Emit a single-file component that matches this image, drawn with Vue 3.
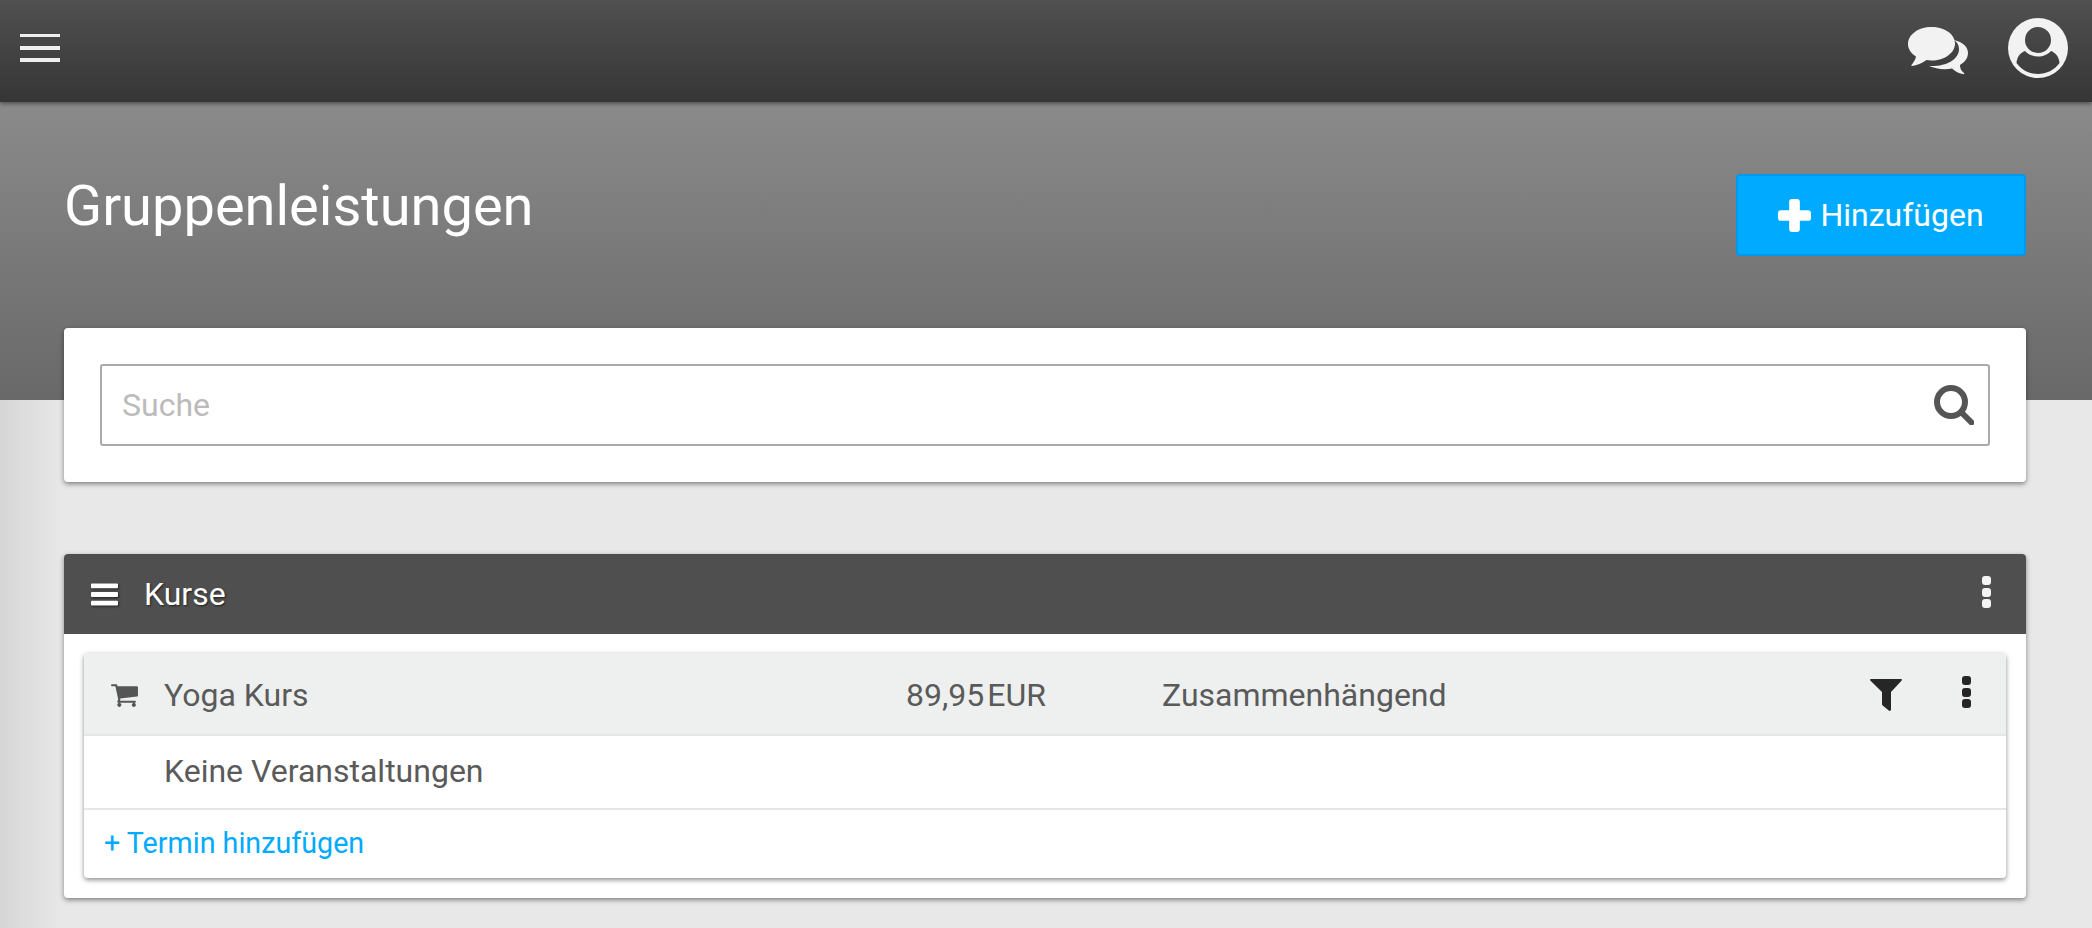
<template>
    <div class="page">
        <header class="topbar">
            <button class="burger"><span></span><span></span><span></span></button>
            <div class="top-icons">
                <svg class="chat" viewBox="0 0 60 48">
                    <path d="M23.500 0C10.500 0 0 7.500 0 17c0 5 3 9.500 8 12.500-.5 3-2.500 6-4.500 8.500-.3.500 0 1 .5 1 5-.5 10-3 14.500-6 1.500.3 3 .5 5 .5 13 0 23.500-7.500 23.500-17S36.500 0 23.500 0z" />
                    <path d="M46 13C55 15 60 20 60 26C60 31 57 35 52 38C52 41 53 44 56 46C56.500 47 56 47.500 55 47C50 46.500 47 44 44 41.500C36 43 28 42 21 39C37 40 51 33 51 22C51 18 49 15 46 13z" />
                </svg>
                <svg class="avatar" viewBox="0 0 60 60">
                    <path fill-rule="evenodd" d="M30 0a30 30 0 1 0 0 60a30 30 0 1 0 0-60zM30 9a13 13 0 1 1 0 26a13 13 0 1 1 0-26zM17 33c3 3.500 8 5.500 13 5.500s10-2 13-5.500c5 2 8 6 8.500 12-5 7-13 11-21.500 11s-16.500-4-21.500-11c.5-6 3.500-10 8.500-12z" />
                </svg>
            </div>
        </header>

        <section class="hero">
            <h1>Gruppenleistungen</h1>
            <button class="add-btn">
                <svg viewBox="0 0 34 34"><path d="M11.500 3a3 3 0 0 1 3-3h5a3 3 0 0 1 3 3v8.500H31a3 3 0 0 1 3 3v5a3 3 0 0 1-3 3h-8.500V31a3 3 0 0 1-3 3h-5a3 3 0 0 1-3-3v-8.500H3a3 3 0 0 1-3-3v-5a3 3 0 0 1 3-3h8.500z" /></svg>
                <span>Hinzufügen</span>
            </button>
        </section>

        <main class="content">
            <div class="card search-card">
                <div class="search-box">
                    <span class="placeholder">Suche</span>
                    <svg class="search-icon" viewBox="0 0 40 40">
                        <circle cx="17" cy="17" r="14" />
                        <line x1="27.500" y1="27.500" x2="37.500" y2="37.500" />
                    </svg>
                </div>
            </div>

            <div class="card group">
                <div class="group-head">
                    <svg class="bars" viewBox="0 0 28 24"><path d="M1 1h26a1 1 0 0 1 1 1v3a1 1 0 0 1-1 1H1a1 1 0 0 1-1-1V2a1 1 0 0 1 1-1zM1 10h26a1 1 0 0 1 1 1v3a1 1 0 0 1-1 1H1a1 1 0 0 1-1-1v-3a1 1 0 0 1 1-1zM1 19h26a1 1 0 0 1 1 1v3a1 1 0 0 1-1 1H1a1 1 0 0 1-1-1v-3a1 1 0 0 1 1-1z" /></svg>
                    <span class="group-title">Kurse</span>
                    <span class="dots light"><i></i><i></i><i></i></span>
                </div>
                <div class="group-body">
                    <div class="inner">
                        <div class="row row-head">
                            <svg class="cart" viewBox="0 0 1792 1792"><path d="M704 1536q0 52-38 90t-90 38-90-38-38-90 38-90 90-38 90 38 38 90zm896 0q0 52-38 90t-90 38-90-38-38-90 38-90 90-38 90 38 38 90zm128-1088v512q0 24-16.500 42.500t-40.500 21.500l-1044 122q13 60 13 70 0 16-24 64h920q26 0 45 19t19 45-19 45-45 19h-1024q-26 0-45-19t-19-45q0-11 8-31.500t16-36 21.500-40 15.500-29.500l-177-823h-204q-26 0-45-19t-19-45 19-45 45-19h256q16 0 28.500 6.500t19.500 15.500 13 24.500 8 26 5.500 29.500 4.500 26h1201q26 0 45 19t19 45z" /></svg>
                            <span class="name">Yoga Kurs</span>
                            <span class="price">89,95<span class="cur">EUR</span></span>
                            <span class="kind">Zusammenhängend</span>
                            <svg class="filter" viewBox="0 0 32 32"><path d="M1 0h30c1 0 1.200.8.7 1.500L21 13v17.500c0 1.300-1.300 1.800-2.200 1L12.700 26.500c-.4-.3-.7-.8-.7-1.300V13L.3 1.500C-.2.8 0 0 1 0z" /></svg>
                            <span class="dots"><i></i><i></i><i></i></span>
                        </div>
                        <div class="row row-empty">Keine Veranstaltungen</div>
                        <a class="row row-add">+ Termin hinzufügen</a>
                    </div>
                </div>
            </div>
        </main>
    </div>
</template>

<script setup>
</script>

<style>
html, body {
    margin: 0;
    background: #e8e8e8;
}
</style>

<style scoped>
.page {
    height: 928px;
    overflow: hidden;
    font-family: Roboto, "Liberation Sans", sans-serif;
    background: linear-gradient(to right, #d6d6d6, #e8e8e8 64px);
}

/* top bar */
.topbar {
    height: 102px;
    box-sizing: border-box;
    display: flex;
    align-items: center;
    justify-content: space-between;
    padding: 0 24px 0 20px;
    background: linear-gradient(#505050, #363636);
    box-shadow: 0 2px 4px rgba(0, 0, 0, .4);
    position: relative;
}

.burger {
    display: flex;
    flex-direction: column;
    gap: 8px;
    width: 40px;
    margin: -6px 0 0;
    padding: 0;
    border: 0;
    background: none;
}

.burger span {
    height: 4px;
    background: #eee;
}

.burger span:first-child {
    height: 2.500px;
    margin-bottom: 1.500px;
}

.top-icons {
    display: flex;
    align-items: center;
    gap: 40px;
    margin-top: -6px;
}

.chat {
    width: 60px;
    height: 48px;
    fill: #f2f2f2;
    margin-top: 5px;
}

.avatar {
    width: 60px;
    height: 60px;
    fill: #f2f2f2;
}

/* hero */
.hero {
    height: 298px;
    box-sizing: border-box;
    display: flex;
    align-items: flex-start;
    justify-content: space-between;
    padding: 72px 66px 0 64px;
    background: linear-gradient(#8a8a8a, #696969);
}

.hero h1 {
    margin: 0;
    font-size: 56px;
    line-height: 64px;
    font-weight: 400;
    color: #fff;
}

.add-btn {
    width: 290px;
    height: 82px;
    display: flex;
    align-items: center;
    justify-content: center;
    gap: 9px;
    padding: 0;
    color: #fff;
    font: 400 32px Roboto, sans-serif;
    background: #0af;
    border: 2px solid #09e;
    border-radius: 4px;
}

.add-btn svg {
    width: 33px;
    height: 33px;
    fill: #fff;
}

/* cards */
.content {
    margin-top: -72px;
    padding: 0 66px 0 64px;
}

.card {
    background: #fff;
    border-radius: 4px;
    box-shadow: 0 2px 5px rgba(0, 0, 0, .45);
}

.search-card {
    height: 154px;
    box-sizing: border-box;
    padding: 36px;
}

.search-box {
    height: 82px;
    box-sizing: border-box;
    display: flex;
    align-items: center;
    justify-content: space-between;
    padding: 0 14px 0 20px;
    border: 2px solid #aaa;
    border-radius: 3px;
}

.placeholder {
    font-size: 32px;
    color: #bbb;
}

.search-icon {
    width: 40px;
    height: 40px;
    fill: none;
    stroke: #555;
    stroke-width: 6px;
    stroke-linecap: round;
}

.group {
    margin-top: 72px;
}

.group-head {
    height: 80px;
    box-sizing: border-box;
    display: flex;
    align-items: center;
    padding: 0 35px 0 27px;
    background: #4f4f4f;
    border-radius: 4px 4px 0 0;
}

.bars {
    width: 27px;
    height: 24px;
    fill: #fff;
    filter: drop-shadow(1px 1px 1px rgba(0, 0, 0, .6));
}

.group-title {
    margin-left: 26px;
    flex: 1;
    font-size: 32px;
    color: #fff;
    text-shadow: 1px 1px 2px rgba(0, 0, 0, .6);
}

.dots {
    display: flex;
    flex-direction: column;
    gap: 2.500px;
    width: 9px;
}

.dots i {
    height: 9px;
    background: #262626;
    border-radius: 3px;
}

.dots.light {
    margin-top: -4px;
}

.dots.light i {
    background: #f4f4f4;
}

.group-body {
    padding: 19px 20px 20px;
}

.inner {
    border-radius: 4px;
    background: #fff;
    box-shadow: 0 2px 5px rgba(0, 0, 0, .45);
}

.row {
    display: flex;
    align-items: center;
    box-sizing: border-box;
    font-size: 32px;
    color: #5a5a5a;
}

.row-head {
    height: 83px;
    padding: 2px 35px 0 26px;
    background: #eef0ef;
    border-bottom: 2px solid #e6e6e6;
    border-radius: 4px 4px 0 0;
}

.cart {
    width: 29px;
    height: 29px;
    fill: #555;
}

.name {
    margin-left: 25px;
    width: 742px;
}

.price {
    width: 256px;
}

.cur {
    margin-left: 3px;
}

.kind {
    flex: 1;
}

.filter {
    width: 32px;
    height: 32px;
    fill: #262626;
}

.row-head .dots {
    margin: -5px 0 0 60px;
}

.row-empty {
    height: 74px;
    padding: 0 0 2px 80px;
    border-bottom: 2px solid #e6e6e6;
}

.row-add {
    height: 68px;
    padding: 0 0 2px 20px;
    font-size: 28.700px;
    color: #0af;
}
</style>
